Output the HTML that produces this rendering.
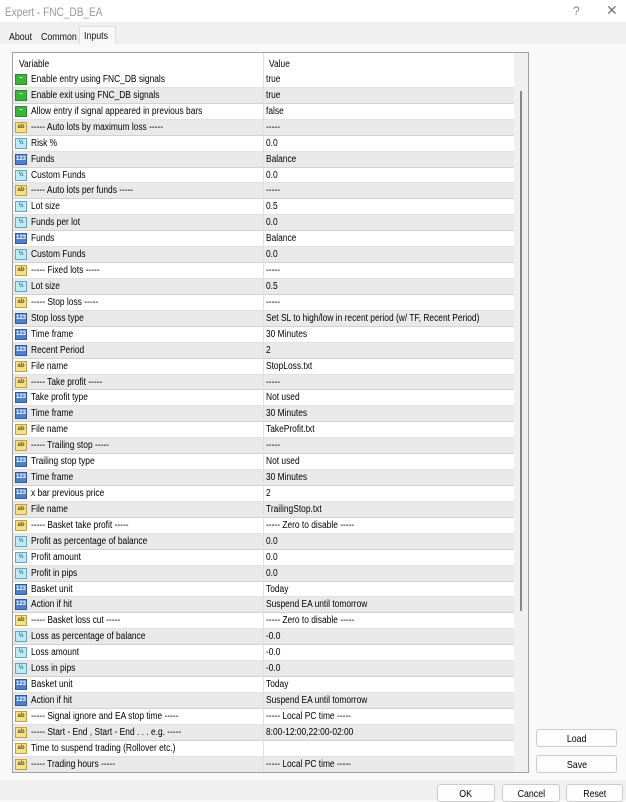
<!DOCTYPE html>
<html><head><style>
*{margin:0;padding:0;box-sizing:border-box}
body{width:626px;height:800px;overflow:hidden;background:#f9f9f9;font-family:"Liberation Sans",sans-serif;font-size:10px;color:#000;position:relative}
.t{display:inline-block;transform:scaleX(0.84);transform-origin:0 0;white-space:nowrap}
.title{position:absolute;left:0;top:0;width:626px;height:22px;background:#fff;color:#999;font-size:12px;padding:5px 0 0 5px}
.title .q{position:absolute;left:573px;top:4px;color:#888}
.title .x{position:absolute;left:606px;top:2px;color:#777;font-size:14px}
.strip{position:absolute;left:0;top:22px;width:626px;height:22px;background:#f0f0f0}
.tab{position:absolute;top:6px;height:16px;padding:3px 0 0 4px;color:#111;font-size:10.5px}
.tab.act{background:#f9f9f9;top:4px;height:18px;border:1px solid #ddd;border-bottom:none}
.list{position:absolute;left:12px;top:52px;width:517px;height:721px;border:1px solid #a0a0a0;background:#fff;overflow:hidden}
.hdr{position:absolute;left:0;top:0;width:501px;height:19px;background:#fff}
.hdr span{position:absolute;top:6px}
.rows{position:absolute;left:0;top:19px;width:501px}
.r{height:15.93px;position:relative;white-space:nowrap;border-bottom:1px solid #e2e2e2}
.r:nth-child(even){background:#e9e9e9;border-bottom:1px solid #d2d2d2}
.r .n{position:absolute;left:18px;top:2px}
.r .v{position:absolute;left:253px;top:2px}
.r .ic{position:absolute;left:2px;top:2px;width:12px;height:11px;border:1px solid #999;font-size:6px;line-height:9px;text-align:center;font-weight:bold;font-style:normal}
.b{background:#3cb43c;border-color:#2a8a2a!important;color:#fff}
.s{background:#f5e08a;border-color:#c0a040!important;color:#553}
.d{background:#bfeaf5;border-color:#60a8c0!important;color:#367}
.e{background:#4f7fc8;border-color:#335a99!important;color:#fff}
.col{position:absolute;left:250px;top:0;width:1px;height:721px;background:#e0e0e0}
.sb{position:absolute;left:501px;top:0;width:14px;height:719px;background:#f0f0f0}
.th{position:absolute;left:6px;top:38px;width:2px;height:520px;background:#888}
.btn{position:absolute;background:#fdfdfd;border:1px solid #ccc;border-radius:3px;text-align:center;font-size:10.5px;padding-top:3px}
</style></head><body>
<div class="title"><span class="t">Expert - FNC_DB_EA</span><span class="q">?</span><span class="x">✕</span></div>
<div class="strip">
<div class="tab" style="left:5px"><span class="t">About</span></div>
<div class="tab" style="left:37px"><span class="t">Common</span></div>
<div class="tab act" style="left:79px;width:37px"><span class="t">Inputs</span></div>
</div>
<div class="list">
<div class="hdr"><span style="left:6px" class="t">Variable</span><span style="left:256px" class="t">Value</span></div>
<div class="rows">
<div class="r"><i class="ic b">~</i><span class="n t">Enable entry using FNC_DB signals</span><span class="v t">true</span></div>
<div class="r"><i class="ic b">~</i><span class="n t">Enable exit using FNC_DB signals</span><span class="v t">true</span></div>
<div class="r"><i class="ic b">~</i><span class="n t">Allow entry if signal appeared in previous bars</span><span class="v t">false</span></div>
<div class="r"><i class="ic s">ab</i><span class="n t">----- Auto lots by maximum loss -----</span><span class="v t">-----</span></div>
<div class="r"><i class="ic d">½</i><span class="n t">Risk %</span><span class="v t">0.0</span></div>
<div class="r"><i class="ic e">123</i><span class="n t">Funds</span><span class="v t">Balance</span></div>
<div class="r"><i class="ic d">½</i><span class="n t">Custom Funds</span><span class="v t">0.0</span></div>
<div class="r"><i class="ic s">ab</i><span class="n t">----- Auto lots per funds -----</span><span class="v t">-----</span></div>
<div class="r"><i class="ic d">½</i><span class="n t">Lot size</span><span class="v t">0.5</span></div>
<div class="r"><i class="ic d">½</i><span class="n t">Funds per lot</span><span class="v t">0.0</span></div>
<div class="r"><i class="ic e">123</i><span class="n t">Funds</span><span class="v t">Balance</span></div>
<div class="r"><i class="ic d">½</i><span class="n t">Custom Funds</span><span class="v t">0.0</span></div>
<div class="r"><i class="ic s">ab</i><span class="n t">----- Fixed lots -----</span><span class="v t">-----</span></div>
<div class="r"><i class="ic d">½</i><span class="n t">Lot size</span><span class="v t">0.5</span></div>
<div class="r"><i class="ic s">ab</i><span class="n t">----- Stop loss -----</span><span class="v t">-----</span></div>
<div class="r"><i class="ic e">123</i><span class="n t">Stop loss type</span><span class="v t">Set SL to high/low in recent period (w/ TF, Recent Period)</span></div>
<div class="r"><i class="ic e">123</i><span class="n t">Time frame</span><span class="v t">30 Minutes</span></div>
<div class="r"><i class="ic e">123</i><span class="n t">Recent Period</span><span class="v t">2</span></div>
<div class="r"><i class="ic s">ab</i><span class="n t">File name</span><span class="v t">StopLoss.txt</span></div>
<div class="r"><i class="ic s">ab</i><span class="n t">----- Take profit -----</span><span class="v t">-----</span></div>
<div class="r"><i class="ic e">123</i><span class="n t">Take profit type</span><span class="v t">Not used</span></div>
<div class="r"><i class="ic e">123</i><span class="n t">Time frame</span><span class="v t">30 Minutes</span></div>
<div class="r"><i class="ic s">ab</i><span class="n t">File name</span><span class="v t">TakeProfit.txt</span></div>
<div class="r"><i class="ic s">ab</i><span class="n t">----- Trailing stop -----</span><span class="v t">-----</span></div>
<div class="r"><i class="ic e">123</i><span class="n t">Trailing stop type</span><span class="v t">Not used</span></div>
<div class="r"><i class="ic e">123</i><span class="n t">Time frame</span><span class="v t">30 Minutes</span></div>
<div class="r"><i class="ic e">123</i><span class="n t">x bar previous price</span><span class="v t">2</span></div>
<div class="r"><i class="ic s">ab</i><span class="n t">File name</span><span class="v t">TrailingStop.txt</span></div>
<div class="r"><i class="ic s">ab</i><span class="n t">----- Basket take profit -----</span><span class="v t">----- Zero to disable -----</span></div>
<div class="r"><i class="ic d">½</i><span class="n t">Profit as percentage of balance</span><span class="v t">0.0</span></div>
<div class="r"><i class="ic d">½</i><span class="n t">Profit amount</span><span class="v t">0.0</span></div>
<div class="r"><i class="ic d">½</i><span class="n t">Profit in pips</span><span class="v t">0.0</span></div>
<div class="r"><i class="ic e">123</i><span class="n t">Basket unit</span><span class="v t">Today</span></div>
<div class="r"><i class="ic e">123</i><span class="n t">Action if hit</span><span class="v t">Suspend EA until tomorrow</span></div>
<div class="r"><i class="ic s">ab</i><span class="n t">----- Basket loss cut -----</span><span class="v t">----- Zero to disable -----</span></div>
<div class="r"><i class="ic d">½</i><span class="n t">Loss as percentage of balance</span><span class="v t">-0.0</span></div>
<div class="r"><i class="ic d">½</i><span class="n t">Loss amount</span><span class="v t">-0.0</span></div>
<div class="r"><i class="ic d">½</i><span class="n t">Loss in pips</span><span class="v t">-0.0</span></div>
<div class="r"><i class="ic e">123</i><span class="n t">Basket unit</span><span class="v t">Today</span></div>
<div class="r"><i class="ic e">123</i><span class="n t">Action if hit</span><span class="v t">Suspend EA until tomorrow</span></div>
<div class="r"><i class="ic s">ab</i><span class="n t">----- Signal ignore and EA stop time -----</span><span class="v t">----- Local PC time -----</span></div>
<div class="r"><i class="ic s">ab</i><span class="n t">----- Start - End , Start - End . . . e.g. -----</span><span class="v t">8:00-12:00,22:00-02:00</span></div>
<div class="r"><i class="ic s">ab</i><span class="n t">Time to suspend trading (Rollover etc.)</span><span class="v t"></span></div>
<div class="r"><i class="ic s">ab</i><span class="n t">----- Trading hours -----</span><span class="v t">----- Local PC time -----</span></div>
</div>
<div class="col"></div>
<div class="sb"><div class="th"></div></div>
</div>
<div class="btn" style="left:536px;top:729px;width:81px;height:18px"><span class="t" style="transform-origin:50% 0">Load</span></div>
<div class="btn" style="left:536px;top:755px;width:81px;height:18px"><span class="t" style="transform-origin:50% 0">Save</span></div>
<div style="position:absolute;left:0;top:780px;width:626px;height:20px;background:#f0f0f0"></div>
<div class="btn" style="left:437px;top:784px;width:58px;height:18px"><span class="t" style="transform-origin:50% 0">OK</span></div>
<div class="btn" style="left:502px;top:784px;width:58px;height:18px"><span class="t" style="transform-origin:50% 0">Cancel</span></div>
<div class="btn" style="left:566px;top:784px;width:57px;height:18px"><span class="t" style="transform-origin:50% 0">Reset</span></div>
</body></html>
